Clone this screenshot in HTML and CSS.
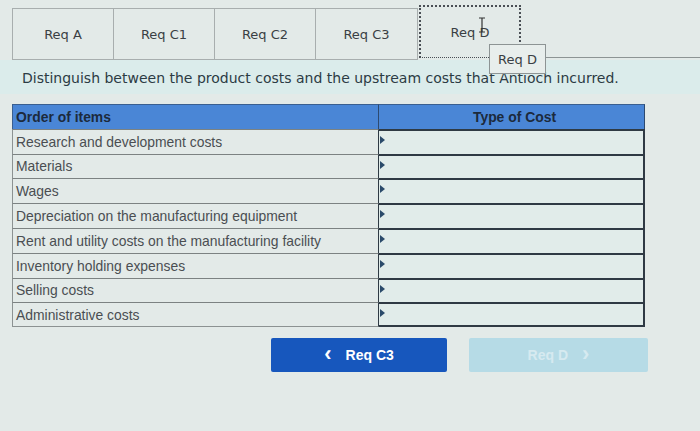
FILE: index.html
```html
<!DOCTYPE html>
<html>
<head>
<meta charset="utf-8">
<link rel="stylesheet" href="styles.css">
</head>
<body>
<div class="page">
  <div class="tabs">
    <div class="tab">Req A</div>
    <div class="tab">Req C1</div>
    <div class="tab">Req C2</div>
    <div class="tab">Req C3</div>
    <div class="tab active">Req D
      <svg class="ibeam" width="8" height="16" viewBox="0 0 8 16"><path d="M1 1h6M4 1v14M1 15h6" stroke="#333" stroke-width="1.2" fill="none"/></svg>
      <div class="tooltip">Req D</div>
    </div>
    <div class="tab-rest"></div>
  </div>
  <div class="instruction">Distinguish between the product costs and the upstream costs that Antioch incurred.</div>
  <div class="grid">
    <div class="hcell left">Order of items</div>
    <div class="hcell right">Type of Cost</div>
    <div class="cell">Research and development costs</div><div class="sel"><span class="tri"></span></div>
    <div class="cell">Materials</div><div class="sel"><span class="tri"></span></div>
    <div class="cell">Wages</div><div class="sel"><span class="tri"></span></div>
    <div class="cell">Depreciation on the manufacturing equipment</div><div class="sel"><span class="tri"></span></div>
    <div class="cell">Rent and utility costs on the manufacturing facility</div><div class="sel"><span class="tri"></span></div>
    <div class="cell">Inventory holding expenses</div><div class="sel"><span class="tri"></span></div>
    <div class="cell">Selling costs</div><div class="sel"><span class="tri"></span></div>
    <div class="cell last">Administrative costs</div><div class="sel last"><span class="tri"></span></div>
  </div>
  <div class="nav">
    <button class="btn prev"><span class="chev">&lsaquo;</span>Req C3</button>
    <button class="btn next">Req D<span class="chev">&rsaquo;</span></button>
  </div>
</div>
</body>
</html>
```

FILE: styles.css
```css
html, body {
  margin: 0;
  padding: 0;
}
body {
  width: 700px;
  height: 431px;
  background: #e3eae8;
  overflow: hidden;
  font-family: "DejaVu Sans", Verdana, sans-serif;
}
.page {
  padding-top: 8px;
}
.tabs {
  display: flex;
  padding-left: 12px;
  height: 52px;
}
.tab {
  position: relative;
  width: 101px;
  border: 1px solid #a8aeae;
  border-right: none;
  display: flex;
  align-items: center;
  justify-content: center;
  font-size: 13px;
  color: #3a3f44;
  box-sizing: border-box;
}
.tab:nth-child(4) {
  border-right: 1px solid #a8aeae;
  width: 103px;
}
.tab.active {
  border: 2px dotted #4a4f55;
  margin-top: -3px;
  margin-left: 1px;
  border-bottom: 1px dotted #4a4f55;
  height: 53px;
  width: 102px;
}
.ibeam {
  position: absolute;
  left: 57px;
  top: 10px;
}
.tooltip {
  position: absolute;
  left: 68px;
  top: 37px;
  width: 57px;
  height: 30px;
  box-sizing: border-box;
  border: 1px solid #8d9494;
  background: #e8eeec;
  font-size: 13px;
  color: #3a3f44;
  display: flex;
  align-items: center;
  justify-content: center;
  z-index: 2;
}
.tab-rest {
  flex: 1;
  border-bottom: 1px solid #8d9494;
  margin-bottom: 2px;
}
.instruction {
  background: #dbeceb;
  padding: 10px 0 8px 22px;
  font-size: 14px;
  color: #2c3b44;
  margin-bottom: 10px;
}
.grid {
  margin-left: 12px;
  width: 633px;
  display: grid;
  grid-template-columns: 367px 266px;
  grid-auto-rows: 24.8px;
  font-family: "Liberation Sans", Arial, sans-serif;
  font-size: 13.9px;
}
.hcell {
  background: #4a86d6;
  color: #1c2a3c;
  font-weight: bold;
  display: flex;
  align-items: center;
  border-top: 1px solid #3a5f90;
}
.hcell.left {
  padding-left: 3px;
  border-left: 1px solid #3a5f90;
  border-right: 1px solid #2d4a70;
}
.hcell.right {
  justify-content: center;
  border-right: 1px solid #2d4a70;
  padding-left: 6px;
}
.cell {
  display: flex;
  align-items: center;
  padding-left: 3px;
  color: #4a4e52;
  border-left: 1px solid #8c9292;
  border-right: 1px solid #2f3a44;
  border-top: 1px solid #7c8282;
}
.cell.last {
  border-bottom: 1px solid #8c9292;
}
.sel {
  position: relative;
  border-top: 2px solid #2f3a44;
  border-right: 2px solid #2f3a44;
  background: #e1ecea;
}
.sel.last {
  border-bottom: 2px solid #2f3a44;
}
.tri {
  position: absolute;
  left: 1px;
  top: 5px;
  width: 0;
  height: 0;
  border-top: 4px solid transparent;
  border-bottom: 4px solid transparent;
  border-left: 5px solid #2a4a6a;
}
.nav {
  display: flex;
  gap: 22px;
  padding-left: 271px;
  margin-top: 11px;
}
.btn {
  height: 34px;
  border: none;
  border-radius: 2px;
  font-family: "Liberation Sans", Arial, sans-serif;
  font-weight: bold;
  font-size: 14px;
  display: flex;
  align-items: center;
  justify-content: center;
  padding: 0;
}
.prev {
  width: 176px;
  background: #1757bd;
  color: #ffffff;
}
.prev .chev {
  font-size: 22px;
  margin-right: 14px;
  margin-top: -3px;
}
.next {
  width: 179px;
  background: #b6dbe6;
  color: #d6eaf0;
}
.next .chev {
  font-size: 22px;
  margin-left: 14px;
  margin-top: -3px;
}
```
